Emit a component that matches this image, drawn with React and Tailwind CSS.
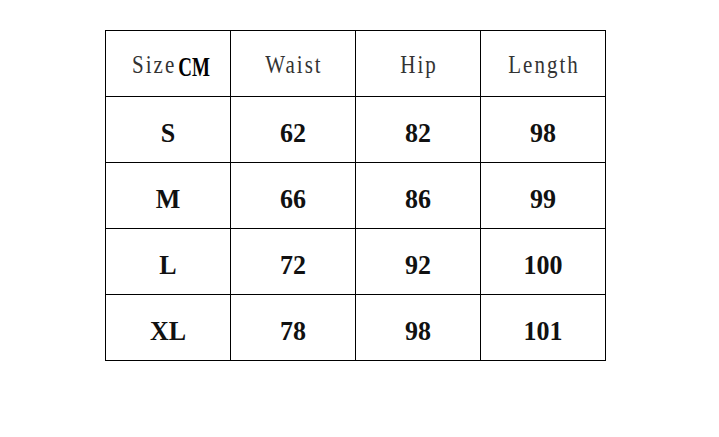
import React from 'react';

const headers = ['Waist', 'Hip', 'Length'];

const rows = [
  ['S', '62', '82', '98'],
  ['M', '66', '86', '99'],
  ['L', '72', '92', '100'],
  ['XL', '78', '98', '101'],
];

const App = () => {
  return (
    <div className="w-[719px] h-[437px] bg-white">
      <div className="pt-[30px] pl-[105px]">
        <div className="grid grid-cols-[repeat(4,125px)] w-[501px] border-l border-t border-black">
          {/* Header row */}
          <div className="h-[66px] border-r border-b border-black flex items-center justify-center pt-[4px] pl-[6px]">
            <span className="inline-block scale-y-[1.15] text-[21px] tracking-[2px] text-[#333] font-['Liberation_Serif',serif]">Size</span>
            <span className="inline-block scale-y-[1.45] text-[19px] font-bold text-black font-['Liberation_Serif',serif] ml-[2px] mt-[3px]">CM</span>
          </div>
          {headers.map((h) => (
            <div
              key={h}
              className="h-[66px] border-r border-b border-black flex items-center justify-center pt-[5px] pl-[2px]"
            >
              <span className="inline-block scale-y-[1.15] text-[21px] tracking-[2px] text-[#333] font-['Liberation_Serif',serif]">{h}</span>
            </div>
          ))}

          {/* Body rows */}
          {rows.map((row) =>
            row.map((cell, i) => (
              <div
                key={row[0] + i}
                className="h-[66px] border-r border-b border-black flex items-center justify-center pt-[5px]"
              >
                <span className="inline-block scale-y-[1.08] text-[26px] font-bold text-[#111] font-['Liberation_Serif',serif]">{cell}</span>
              </div>
            ))
          )}
        </div>
      </div>
    </div>
  );
};

export default App;
